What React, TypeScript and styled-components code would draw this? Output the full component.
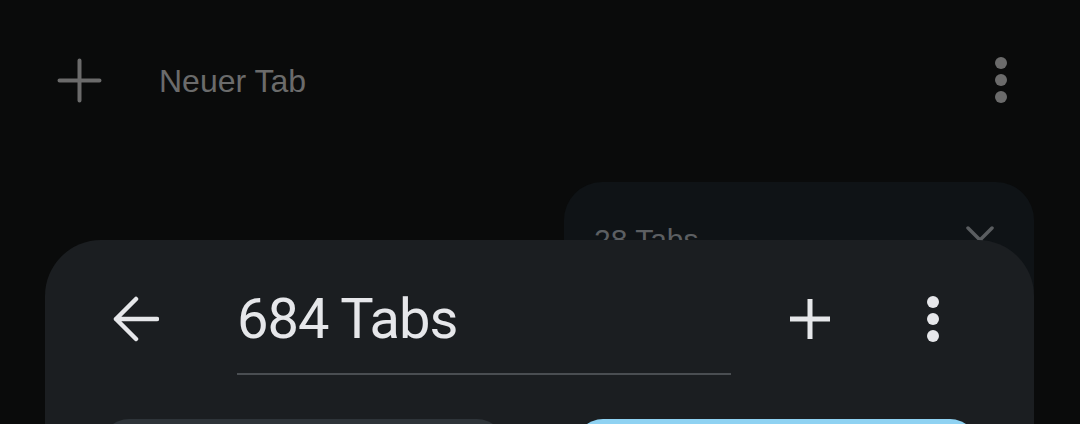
import React from "react";
import styled, { createGlobalStyle } from "styled-components";

const GlobalStyle = createGlobalStyle`
  html, body {
    margin: 0;
    padding: 0;
    background: #0a0b0b;
    width: 1080px;
    height: 424px;
    overflow: hidden;
  }
  #root {
    width: 1080px;
    height: 424px;
  }
`;

const Page = styled.div`
  width: 1080px;
  height: 424px;
  display: flex;
  flex-direction: column;
  background: #0a0b0b;
  overflow: hidden;
`;

const TopBar = styled.div`
  height: 160px;
  flex-shrink: 0;
  display: flex;
  align-items: center;
  gap: 57px;
  padding: 0 73px 0 57px;
  box-sizing: border-box;
`;

const TopTitle = styled.div`
  flex: 1;
  margin-top: 2px;
  font-family: "Liberation Sans", Arial, sans-serif;
  font-size: 32px;
  line-height: 32px;
  color: #6b6b6b;
`;

const Dots = styled.div<{ $color: string; $size: number; $gap: number }>`
  display: flex;
  flex-direction: column;
  align-items: center;
  gap: ${(p) => p.$gap}px;
  span {
    display: block;
    width: ${(p) => p.$size}px;
    height: ${(p) => p.$size}px;
    border-radius: 50%;
    background: ${(p) => p.$color};
  }
`;

const Stack = styled.div`
  display: grid;
  grid-template-columns: 989px;
  margin: 22px 0 0 45px;
  flex: 1;
  min-height: 0;
`;

const BackCard = styled.div`
  grid-area: 1 / 1;
  margin-left: 519px;
  height: 300px;
  border-radius: 38px;
  background: #0f1316;
  box-sizing: border-box;
  padding: 40px 40px 0 30px;
`;

const BackHeader = styled.div`
  display: flex;
  align-items: center;
  justify-content: space-between;
`;

const BackTitle = styled.div`
  font-family: "Liberation Sans", Arial, sans-serif;
  font-size: 30px;
  line-height: 36px;
  color: #5c5f62;
`;

const FrontCard = styled.div`
  grid-area: 1 / 1;
  margin-top: 58px;
  height: 400px;
  border-radius: 56px 56px 0 0;
  background: #1b1e21;
  position: relative;
  z-index: 1;
  box-sizing: border-box;
  padding-top: 46px;
  display: flex;
  flex-direction: column;
`;

const Toolbar = styled.div`
  display: flex;
  align-items: flex-start;
  padding-left: 68px;
`;

const IconSlot = styled.div<{ $w: number; $ml: number }>`
  width: ${(p) => p.$w}px;
  height: 66px;
  margin-left: ${(p) => p.$ml}px;
  display: flex;
  align-items: center;
  justify-content: center;
  flex-shrink: 0;
`;

const TitleField = styled.div`
  width: 494px;
  margin-left: 78px;
  display: flex;
  flex-direction: column;
  flex-shrink: 0;
`;

const TitleText = styled.div`
  font-family: Roboto, "Noto Sans", sans-serif;
  font-size: 56px;
  line-height: 66px;
  letter-spacing: -1px;
  color: #e6e7ea;
  white-space: nowrap;
`;

const Underline = styled.div`
  height: 2px;
  margin-top: 21px;
  background: #4a4e52;
`;

const Grid = styled.div`
  display: grid;
  grid-template-columns: 1fr 1fr;
  gap: 70px;
  padding: 0 56px;
  margin-top: 44px;
`;

const TabCard = styled.div<{ $bg: string }>`
  height: 200px;
  border-radius: 28px;
  background: ${(p) => p.$bg};
`;

const TopPlus = () => (
  <svg width="45" height="45" viewBox="0 0 45 45">
    <path d="M22.5 2.5V42.5M2.5 22.5H42.5" stroke="#6b6b6b" strokeWidth="4" strokeLinecap="round" fill="none" />
  </svg>
);

const CloseX = () => (
  <svg width="28" height="28" viewBox="0 0 28 28">
    <path d="M2 2L26 26M26 2L2 26" stroke="#5a5d60" strokeWidth="3.5" strokeLinecap="round" fill="none" />
  </svg>
);

const BackArrow = () => (
  <svg width="46" height="46" viewBox="0 0 46 46">
    <path d="M44 23H3M23 3L3 23L23 43" stroke="#e6e7ea" strokeWidth="4.5" strokeLinecap="round" strokeLinejoin="round" fill="none" />
  </svg>
);

const Plus = () => (
  <svg width="40" height="40" viewBox="0 0 40 40">
    <path d="M20 0V40M0 20H40" stroke="#e6e7ea" strokeWidth="5" fill="none" />
  </svg>
);

export default function App() {
  return (
    <>
      <GlobalStyle />
      <Page>
        <TopBar>
          <TopPlus />
          <TopTitle>Neuer Tab</TopTitle>
          <Dots $color="#6b6b6b" $size={12} $gap={5}>
            <span />
            <span />
            <span />
          </Dots>
        </TopBar>
        <Stack>
          <BackCard>
            <BackHeader>
              <BackTitle>28 Tabs</BackTitle>
              <CloseX />
            </BackHeader>
          </BackCard>
          <FrontCard>
            <Toolbar>
              <IconSlot $w={46} $ml={0}>
                <BackArrow />
              </IconSlot>
              <TitleField>
                <TitleText>684 Tabs</TitleText>
                <Underline />
              </TitleField>
              <IconSlot $w={40} $ml={59}>
                <Plus />
              </IconSlot>
              <IconSlot $w={12} $ml={97}>
                <Dots $color="#e6e7ea" $size={12} $gap={4.7}>
                  <span />
                  <span />
                  <span />
                </Dots>
              </IconSlot>
            </Toolbar>
            <Grid>
              <TabCard $bg="#2e3439" />
              <TabCard $bg="#8fd2f2" />
            </Grid>
          </FrontCard>
        </Stack>
      </Page>
    </>
  );
}
